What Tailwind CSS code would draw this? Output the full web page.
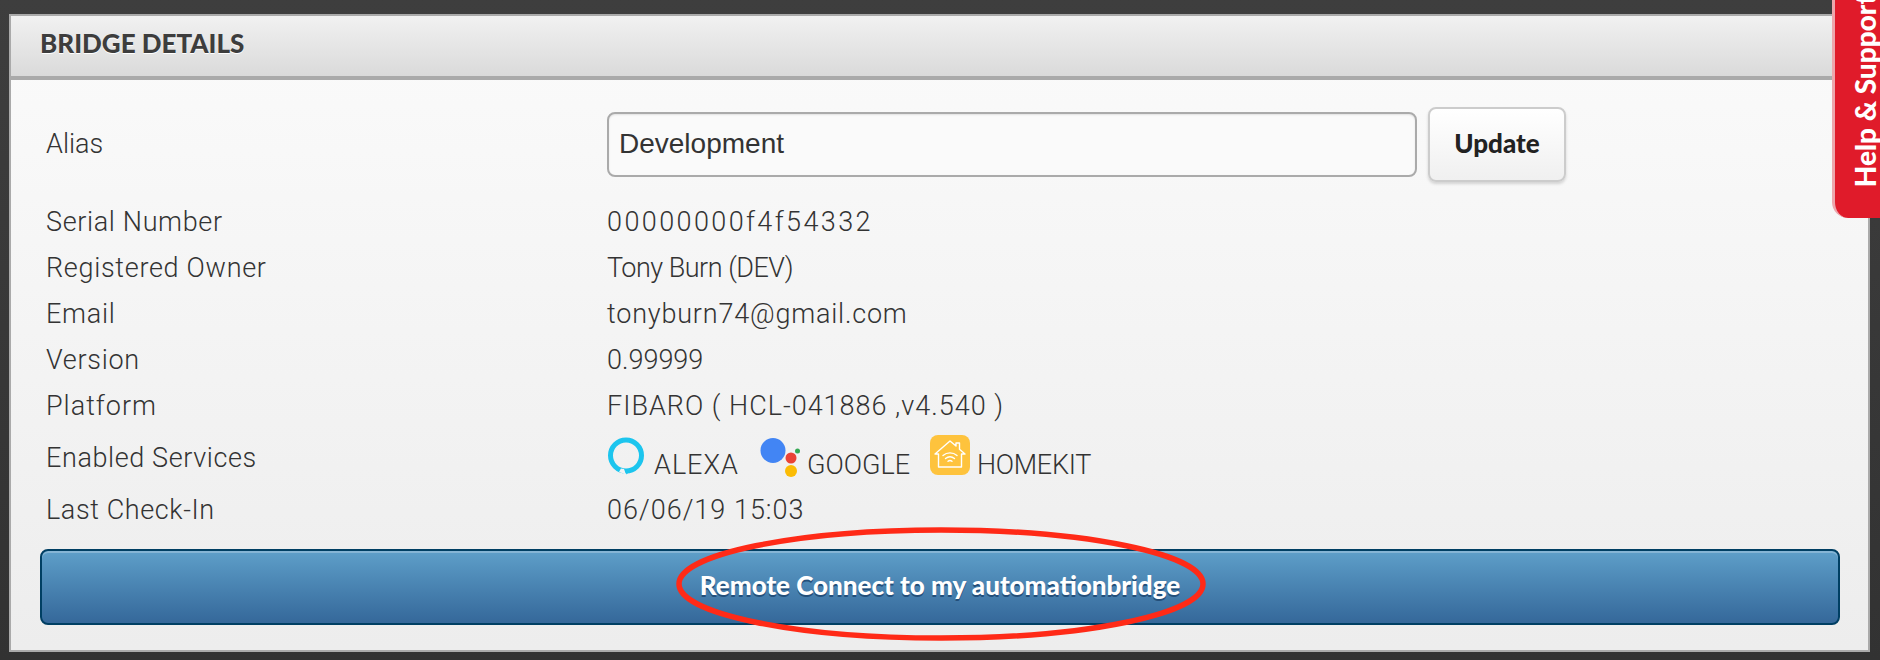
<!DOCTYPE html>
<html lang="en">
<head>
  <meta charset="UTF-8" />
  <title>Bridge Details</title>
  <script src="https://cdn.jsdelivr.net/npm/@tailwindcss/browser@4"></script>
</head>
<body class="relative w-[1880px] h-[660px] overflow-hidden bg-gradient-to-b from-[#3e3e3e] to-[#323232] font-['Roboto',sans-serif] font-light text-[27px] text-[#333]">

  <div class="absolute left-[9px] top-[14px] h-[638px] border-2 border-[#aaa] bg-gradient-to-b from-[#fbfbfb] to-[#ededed] w-[1861px]">
    <div class="h-[64px] flex items-center pl-[29px] pb-[5px] bg-gradient-to-b from-[#f1f1f1] to-[#dadada] border-b-4 border-[#aaa]">
      <h2 class="font-['Lato',sans-serif] font-black text-[26px] text-[#3d3d3d] [text-shadow:0_1px_0_#fff]">BRIDGE DETAILS</h2>
    </div>

    <div class="pl-[35px] grid grid-cols-[561px_1fr] items-center">
      <div class="h-[119px] flex items-center pt-[9px]">Alias</div>
      <div class="h-[119px] flex items-center gap-[11px] pt-[9px]">
        <input value="Development" class="w-[810px] h-[65px] px-[10px] rounded-lg border-2 border-[#aaa] bg-[#fafafa] font-['Liberation_Sans',sans-serif] font-normal text-[28px] text-[#333] shadow-[inset_0_1px_2px_rgba(0,0,0,0.1)]" />
        <button class="w-[138px] h-[75px] pb-[1px] rounded-lg border-2 border-[#ccc] bg-gradient-to-b from-white to-[#f0f0f0] font-['Lato',sans-serif] font-black text-[26px] text-[#222] shadow-[0_2px_3px_rgba(0,0,0,0.15)]">Update</button>
      </div>

      <div class="h-[46px] flex items-center tracking-[0.65px]">Serial Number</div>
      <div class="h-[46px] flex items-center tracking-[2.400px]">00000000f4f54332</div>
      <div class="h-[46px] flex items-center tracking-[0.7px]">Registered Owner</div>
      <div class="h-[46px] flex items-center tracking-[-0.5px]">Tony Burn (DEV)</div>
      <div class="h-[46px] flex items-center tracking-[0.7px]">Email</div>
      <div class="h-[46px] flex items-center tracking-[0.8px]">tonyburn74@gmail.com</div>
      <div class="h-[46px] flex items-center tracking-[0.7px]">Version</div>
      <div class="h-[46px] flex items-center">0.99999</div>
      <div class="h-[46px] flex items-center tracking-[1px]">Platform</div>
      <div class="h-[46px] flex items-center tracking-[1px]">FIBARO ( HCL-041886 ,v4.540 )</div>

      <div class="h-[58px] flex items-center tracking-[0.6px]">Enabled Services</div>
      <div class="h-[58px] flex items-end pb-[1px] -mt-[1px]">
        <svg class="w-[38px] h-[38px] mb-[11px]" viewBox="0 0 38 38">
          <circle cx="19" cy="18.500" r="15.500" fill="none" stroke="#1cc5ee" stroke-width="5" />
          <path d="M14 31.500 17 32 19 37.500 12 35Z" fill="#f3f3f3" />
          <path d="M18 32.500 26 31 19.500 37.500Z" fill="#1cc5ee" />
        </svg>
        <span class="ml-[9px] w-[106px] tracking-[1px]">ALEXA</span>
        <svg class="w-[40px] h-[44px] mb-[4px]" viewBox="0 0 40 44">
          <circle cx="13" cy="12.500" r="12.500" fill="#4285f4" />
          <circle cx="31" cy="20" r="5.500" fill="#ea4335" />
          <circle cx="37.500" cy="13" r="2.500" fill="#34a853" />
          <circle cx="31" cy="33" r="6" fill="#fbbc05" />
        </svg>
        <span class="ml-[7px] w-[123px]">GOOGLE</span>
        <svg class="w-[40px] h-[40px] mb-[11px]" viewBox="0 0 40 40">
          <rect width="40" height="40" rx="8" fill="#fec33d" />
          <g fill="none" stroke="#fff" stroke-width="1.400" stroke-linejoin="round" stroke-linecap="round">
            <path d="M5 19 20 6l6 5V8h3.500v6.200L35 19h-3.500v13h-23V19Z" />
            <path d="M13 20.500c4-3.500 10-3.500 14 0M15.500 23.500c2.700-2.200 6.300-2.200 9 0M18 26.300c1.200-1 2.800-1 4 0" />
          </g>
        </svg>
        <span class="ml-[7px] tracking-[-0.3px]">HOMEKIT</span>
      </div>

      <div class="h-[46px] flex items-center tracking-[0.6px]">Last Check-In</div>
      <div class="h-[46px] flex items-center tracking-[1px]">06/06/19 15:03</div>
    </div>

    <button class="block ml-[29px] mt-[16px] w-[1800px] h-[76px] pb-[4px] rounded-lg border-2 border-[#003f63] bg-gradient-to-b from-[#5e9fc9] to-[#35689a] shadow-[inset_0_2px_0_#85b5d5] font-['Lato',sans-serif] font-black text-[26px] text-white [text-shadow:0_2px_0_#234f7a]">Remote Connect to my automationbridge</button>
  </div>

  <!-- hand drawn annotation around the button -->
  <svg class="absolute left-[669px] top-[522px] w-[545px] h-[126px]" viewBox="0 0 545 126">
    <ellipse cx="272" cy="62" rx="262" ry="54" fill="none" stroke="#ff2a17" stroke-width="5.500" />
  </svg>

  <!-- help tab -->
  <div class="absolute left-[1832px] -top-[10px] w-[60px] h-[228px] rounded-bl-2xl border-l-[3px] border-[#eda6ac] bg-[#e01b2a] overflow-hidden">
    <span class="absolute left-[9px] bottom-[31px] [writing-mode:vertical-rl] rotate-180 whitespace-nowrap font-['Lato',sans-serif] font-black text-[28px] text-white">Help &amp; Support</span>
  </div>
</body>
</html>
